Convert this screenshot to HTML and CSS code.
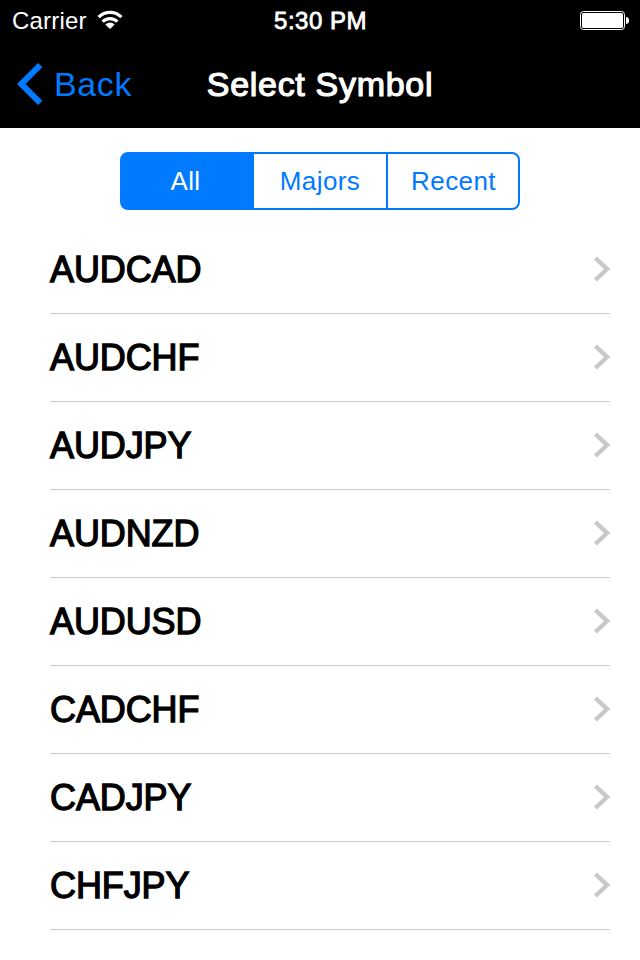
FILE: index.html
```html
<!DOCTYPE html>
<html lang="en">
  <head>
    <meta charset="UTF-8" />
    <meta name="viewport" content="width=device-width, initial-scale=1.0" />
    <title>Select Symbol</title>
    <link rel="stylesheet" href="styles.css">
  </head>
  <body>
    <header>
      <div class="status-bar">
        <div class="carrier">
          <span>Carrier</span>
          <svg class="wifi" width="26" height="20" viewBox="0 0 26 20">
            <path d="M1.6 7.2A16 16 0 0 1 24.4 7.2" />
            <path d="M5.6 11.6A10.5 10.5 0 0 1 20.4 11.6" />
            <path class="dot" d="M8.3 14.4Q13 10.4 17.7 14.4L13 19Z" />
          </svg>
        </div>
        <span class="time">5:30 PM</span>
        <svg class="battery" width="49" height="19" viewBox="0 0 49 19">
          <rect class="case" x="0.5" y="0.5" width="44" height="18" rx="3" />
          <rect x="2" y="2" width="41" height="15" rx="1.5" />
          <path d="M46 6Q49 6.3 49 9.5T46 13Z" />
        </svg>
      </div>
      <nav class="nav-bar">
        <a class="back" href="#">
          <svg width="26" height="42" viewBox="0 0 26 42">
            <path d="M23.2 2.1L4.2 21L23.2 39.9" />
          </svg>
          <span>Back</span>
        </a>
        <h1>Select Symbol</h1>
      </nav>
    </header>

    <main>
      <div class="segments">
        <button class="selected">All</button>
        <button>Majors</button>
        <button>Recent</button>
      </div>

      <ul class="symbols">
        <li>AUDCAD <svg width="17" height="28" viewBox="0 0 17 28"><path d="M2.4 2L14.1 13L2.4 24" /></svg></li>
        <li>AUDCHF <svg width="17" height="28" viewBox="0 0 17 28"><path d="M2.4 2L14.1 13L2.4 24" /></svg></li>
        <li>AUDJPY <svg width="17" height="28" viewBox="0 0 17 28"><path d="M2.4 2L14.1 13L2.4 24" /></svg></li>
        <li>AUDNZD <svg width="17" height="28" viewBox="0 0 17 28"><path d="M2.4 2L14.1 13L2.4 24" /></svg></li>
        <li>AUDUSD <svg width="17" height="28" viewBox="0 0 17 28"><path d="M2.4 2L14.1 13L2.4 24" /></svg></li>
        <li>CADCHF <svg width="17" height="28" viewBox="0 0 17 28"><path d="M2.4 2L14.1 13L2.4 24" /></svg></li>
        <li>CADJPY <svg width="17" height="28" viewBox="0 0 17 28"><path d="M2.4 2L14.1 13L2.4 24" /></svg></li>
        <li>CHFJPY <svg width="17" height="28" viewBox="0 0 17 28"><path d="M2.4 2L14.1 13L2.4 24" /></svg></li>
      </ul>
    </main>
  </body>
</html>
```
FILE: styles.css
```css
* {
  box-sizing: border-box;
}

body {
  margin: 0;
  font-family: "Liberation Sans", Arial, sans-serif;
  background: #fff;
  color: #000;
}

header {
  height: 128px;
  background: #000;
  color: #fff;
}

/* Status bar */
.status-bar {
  display: grid;
  grid-template-columns: 1fr auto 1fr;
  align-items: center;
  height: 40px;
  padding: 0 11px 0 12px;
  font-size: 24px;
  line-height: 42px;
}

.carrier {
  display: flex;
  align-items: center;
  gap: 10px;
  letter-spacing: 0.2px;
}

.wifi {
  margin-bottom: 2px;
}

.wifi path {
  fill: none;
  stroke: #fff;
  stroke-width: 3.2;
}

.wifi .dot {
  fill: #fff;
  stroke: none;
}

/* stroke the regular face to get a medium weight */
.time {
  letter-spacing: 0.5px;
  -webkit-text-stroke: 0.8px #fff;
}

.battery {
  justify-self: end;
  margin-bottom: 1px;
  fill: #fff;
}

.battery .case {
  fill: none;
  stroke: #fff;
}

/* Navigation bar */
.nav-bar {
  display: grid;
  grid-template-columns: 1fr auto 1fr;
  align-items: center;
  height: 88px;
  padding: 0 17px;
}

.back {
  display: flex;
  align-items: center;
  gap: 11px;
  color: #007aff;
  font-size: 34px;
  letter-spacing: 0.6px;
  text-decoration: none;
}

.back path {
  fill: none;
  stroke: #007aff;
  stroke-width: 6;
}

h1 {
  margin: 0;
  font-size: 34px;
  font-weight: normal;
  letter-spacing: 0.7px;
  -webkit-text-stroke: 1.2px #fff;
}

/* Segmented control */
.segments {
  display: grid;
  grid-template-columns: 132px 132px 1fr;
  width: 400px;
  height: 58px;
  margin: 24px auto 16px;
  border: 2px solid #007aff;
  border-radius: 8px;
  background: linear-gradient(90deg, #007aff 133px, #fff 133px) border-box;
}

.segments button {
  padding: 0;
  border: none;
  background: transparent;
  color: #007aff;
  font-family: inherit;
  font-size: 26px;
  letter-spacing: 0.4px;
}

.segments button:last-child {
  padding-left: 1px;
  border-left: 2px solid #007aff;
}

.segments .selected {
  padding-right: 5px;
  background: #007aff;
  color: #fff;
  border-radius: 6px 0 0 6px;
}

/* Symbol list */
.symbols {
  margin: 0 30px 0 50px;
  padding: 0;
  list-style: none;
}

.symbols li {
  display: flex;
  justify-content: space-between;
  align-items: center;
  height: 88px;
  border-bottom: 1px solid #c8c7cc;
  font-size: 36px;
  letter-spacing: -0.1px;
  -webkit-text-stroke: 1.3px #000;
}

.symbols path {
  fill: none;
  stroke: #c7c7cc;
  stroke-width: 4.4;
}
```
